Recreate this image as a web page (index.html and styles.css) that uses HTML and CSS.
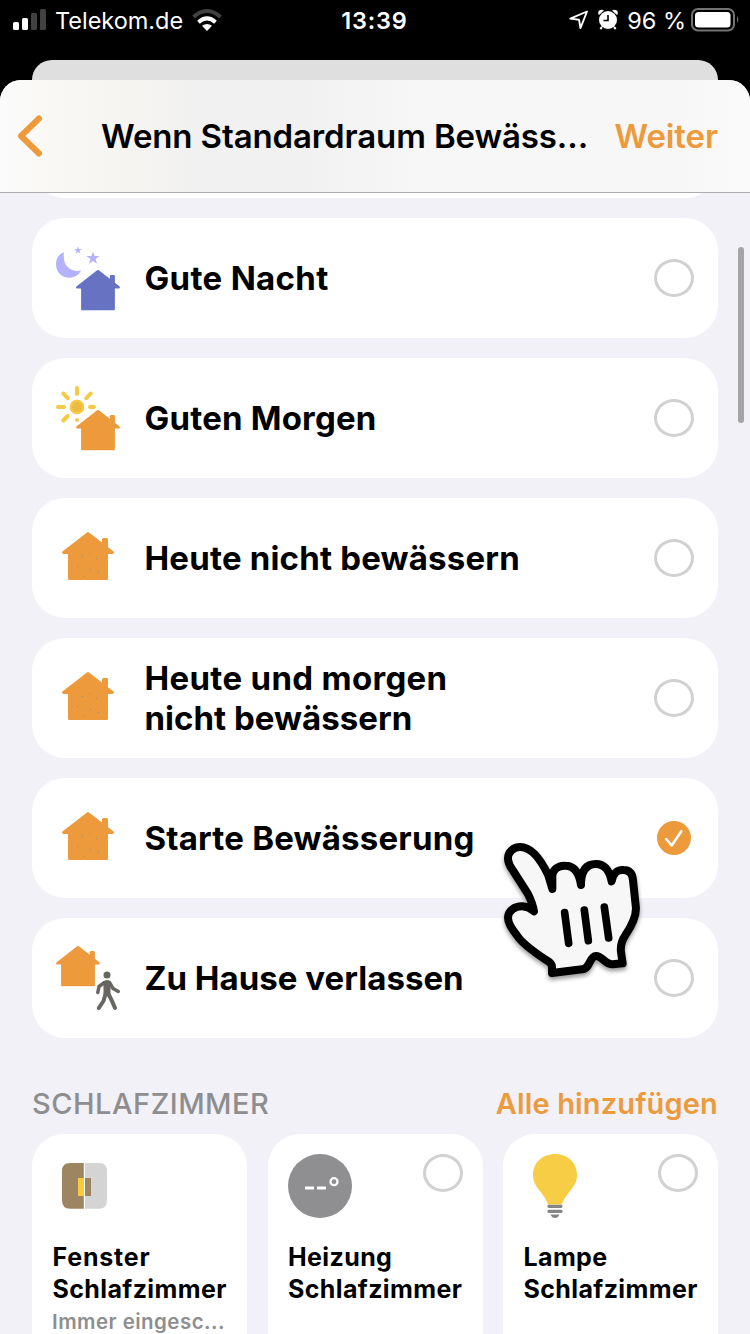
FILE: index.html
```html
<!DOCTYPE html>
<html lang="de">
<head>
<meta charset="utf-8">
<title>Automation</title>
<link rel="stylesheet" href="styles.css">
</head>
<body>
<svg class="defs" width="0" height="0">
  <defs>
    <symbol id="house" viewBox="0 0 52 48"><path d="M25 .4Q26-.3 27 .4L40 10.4V7.500Q40 6 41.500 6H44.500Q46 6 46 7.500V15.200L51.600 19.600Q52.500 21.600 50.500 22H46V46.500Q46 48 44.500 48H7.500Q6 48 6 46.500V22H1.500Q-.5 21.600.4 19.600Z"/></symbol>
  </defs>
</svg>
<div class="phone">
  <div class="status">
    <div class="status-left">
      <svg class="signal" width="34" height="22" viewBox="0 0 34 22"><g fill="#fff"><rect x="0" y="13" width="6" height="8" rx="1.500"/><rect x="9" y="9" width="6" height="12" rx="1.500"/></g><g fill="#414141"><rect x="18" y="4" width="6" height="17" rx="1.500"/><rect x="27" y="0" width="6" height="21" rx="1.500"/></g></svg>
      <span class="carrier">Telekom.de</span>
      <svg class="wifi" width="30" height="22" viewBox="0 0 30 22"><path d="M1.500 8Q15-4 28.500 8" fill="none" stroke="#414141" stroke-width="4"/><path d="M6.500 13.200Q15 5.500 23.500 13.200" fill="none" stroke="#fff" stroke-width="4"/><path d="M10 16.800Q15 13 20 16.800L15 22Z" fill="#fff"/></svg>
    </div>
    <span class="time">13:39</span>
    <div class="status-right">
      <svg class="loc" width="20" height="20" viewBox="0 0 20 20"><path d="M1.300 8.600L18 1.500L11.500 18L10 9.700Z" fill="none" stroke="#fff" stroke-width="1.900" stroke-linejoin="round"/></svg>
      <svg class="alarm" width="20" height="22" viewBox="0 0 20 22"><g fill="#fff"><circle cx="10" cy="11" r="9"/><path d="M.3 5Q-.5 1 4 .8L6 1.400L1 6ZM19.700 5Q20.500 1 16 .8L14 1.400L19 6Z"/></g><path d="M4 18L2.300 20M16 18L17.700 20" stroke="#fff" stroke-width="2"/><path d="M10 6V11.500H5.500" fill="none" stroke="#000" stroke-width="1.600"/></svg>
      <span class="percent">96 %</span>
      <svg class="battery" width="48" height="24" viewBox="0 0 48 24"><rect x="1" y="1" width="42" height="21.500" rx="6" fill="none" stroke="#737373" stroke-width="2"/><rect x="4" y="4" width="35.500" height="15.500" rx="3.500" fill="#fff"/><path d="M46 8Q48.500 11.500 46 15Z" fill="#737373"/></svg>
    </div>
  </div>
  <div class="back-sheet"></div>
  <main class="sheet">
    <header class="nav">
      <svg class="chevron" width="26" height="42" viewBox="0 0 26 42"><path d="M22 3.500L4 21L22 38.500" fill="none" stroke="#ec9a3c" stroke-width="6" stroke-linecap="round" stroke-linejoin="round"/></svg>
      <h1 class="title">Wenn Standardraum Bewäss...</h1>
      <a class="next">Weiter</a>
    </header>
    <div class="content">
      <div class="scenes">
        <div class="scene"></div>
        <div class="scene">
          <svg class="scene-icon" viewBox="0 0 64 64"><path d="M8 6.300C1 9 .1 14 .1 19C.1 26 6 31.800 13 31.800C18 31.800 22.500 29.500 25 24.500C14 27 6 19 8 6.300Z" fill="#b4b2fa"/><path fill="#b4b2fa" d="M22 .3l.9 2.800h2.900l-2.300 1.700.9 2.800-2.400-1.700-2.400 1.700.9-2.800-2.300-1.700h2.900zM37 5.500l1.600 4.600h4.900l-3.900 3 1.400 4.700-4-2.900-4 2.900 1.400-4.700-3.900-3h4.900z"/><use href="#house" x="20" y="24" width="44" height="40.600" fill="#6872c3"/></svg>
          <span class="scene-name wide">Gute Nacht</span><i class="radio"></i>
        </div>
        <div class="scene">
          <svg class="scene-icon" viewBox="0 0 64 64"><circle cx="21" cy="21" r="7.200" fill="#eebb42"/><circle cx="21" cy="21" r="6.200" fill="none" stroke="#f6c944" stroke-width="2"/><path d="M21 2V8M2 21H8M34 21H38M7.300 7.500L11.700 12.200M34.700 7.500L30.300 12.200M7.300 34.500L11.700 30M21 34V34.100" stroke="#f6ca45" stroke-width="4" stroke-linecap="round"/><use href="#house" x="20" y="24" width="44" height="40.600" fill="#ec9a3c"/></svg>
          <span class="scene-name">Guten Morgen</span><i class="radio"></i>
        </div>
        <div class="scene">
          <svg class="scene-icon" viewBox="0 0 64 64"><use href="#house" x="6" y="6" width="52" height="48" fill="#ec9a3c"/><path d="M26 30.500h1M33 27.500h1M40 32.500h1M21 40.500h1M34 43.500h1M42 46.500h1M27 50.500h1" stroke="#a58b69"/></svg>
          <span class="scene-name">Heute nicht bewässern</span><i class="radio"></i>
        </div>
        <div class="scene">
          <svg class="scene-icon" viewBox="0 0 64 64"><use href="#house" x="6" y="6" width="52" height="48" fill="#ec9a3c"/><path d="M26 30.500h1M33 27.500h1M40 32.500h1M21 40.500h1M34 43.500h1M42 46.500h1M27 50.500h1" stroke="#a58b69"/></svg>
          <span class="scene-name"><span class="wide">Heute und morgen</span><br><span class="tight">nicht bewässern</span></span><i class="radio"></i>
        </div>
        <div class="scene">
          <svg class="scene-icon" viewBox="0 0 64 64"><use href="#house" x="6" y="6" width="52" height="48" fill="#ec9a3c"/><path d="M26 30.500h1M33 27.500h1M40 32.500h1M21 40.500h1M34 43.500h1M42 46.500h1M27 50.500h1" stroke="#a58b69"/></svg>
          <span class="scene-name">Starte Bewässerung</span>
          <svg class="check" viewBox="0 0 34 34"><circle cx="17" cy="17" r="17" fill="#ec9a3c"/><path d="M9.200 18L14.700 24.500L24.300 10.200" fill="none" stroke="#fff" stroke-width="2.500" stroke-linecap="round" stroke-linejoin="round"/></svg>
        </div>
        <div class="scene">
          <svg class="scene-icon" viewBox="0 0 64 64"><use href="#house" x="0" y="0" width="44" height="40.600" fill="#ec9a3c"/><g fill="none" stroke="#686662" stroke-linecap="round" stroke-linejoin="round"><circle cx="51" cy="29" r="3.500" fill="#686662" stroke="none"/><path d="M51 37.500V47" stroke-width="7"/><path d="M48.500 36.500L43 40.500L41.800 46.500M53.500 36.500L57 42.500L62.300 45.500" stroke-width="3.500"/><path d="M49.500 48L47.500 55L42.800 62M52.500 48L56 55L59 62" stroke-width="4"/></g></svg>
          <span class="scene-name tight">Zu Hause verlassen</span><i class="radio"></i>
        </div>
      </div>
      <div class="section">
        <h2 class="room">SCHLAFZIMMER</h2>
        <a class="add-all">Alle hinzufügen</a>
      </div>
      <div class="tiles">
        <div class="tile">
          <div class="tile-top"><svg width="64" height="64" viewBox="0 0 64 64"><path d="M31.800 9H18Q10 9 10 17V46Q10 54.700 18 54.700H31.800Z" fill="#9e8562"/><path d="M33 9H47Q55 9 55 17V46Q55 54.700 47 54.700H33Z" fill="#d4d4d4"/><rect x="26" y="24" width="6" height="18" fill="#fac93d"/><rect x="33" y="24" width="6" height="18" fill="#9e8562"/></svg></div>
          <span class="tile-name"><span class="wide">Fenster</span><br>Schlafzimmer</span>
          <span class="tile-note">Immer eingesc...</span>
        </div>
        <div class="tile">
          <div class="tile-top"><svg width="64" height="64" viewBox="0 0 64 64"><circle cx="32" cy="32" r="32" fill="#8f8f91"/><path d="M17 34H26M29 34H38" stroke="#fff" stroke-width="3"/><circle cx="46" cy="27.700" r="3.500" fill="none" stroke="#fff" stroke-width="2.300"/></svg><i class="radio"></i></div>
          <span class="tile-name">Heizung<br>Schlafzimmer</span>
        </div>
        <div class="tile">
          <div class="tile-top"><svg width="64" height="64" viewBox="0 0 64 64"><path d="M32 0C19 0 10 9 10 21C10 34 21 38 25 50.500H39C43 38 54 34 54 21C54 9 45 0 32 0Z" fill="#f7cd46"/><path d="M26 52.300H38M26 57.300H38" stroke="#858585" stroke-width="3.300" stroke-linecap="round"/><path d="M27.500 60.500H36.500Q35 64 32 64Q29 64 27.500 60.500Z" fill="#858585"/></svg><i class="radio"></i></div>
          <span class="tile-name">Lampe<br>Schlafzimmer</span>
        </div>
      </div>
    </div>
    <div class="scrollbar"></div>
  </main>
  <svg class="hand" viewBox="60 120 440 430"><path d="M216 519V500Q216 490 200 481C165 458 125 430 110 405C94 385 84 370 84 353C84 332 105 318 128 319Q148 321 162 334Q158 310 144 282L98 210Q84 191 84 175C84 155 101 141 121 141C155 141 182 178 205 226L217 267V230C217 210 233 196 256 197C282 197 297 215 303 255C303 215 316 192 348 192C374 192 388 210 395 244C400 219 411 209 431 210C448 210 457 220 459 240L468 325C468 355 453 381 436 406C423 425 420 443 424 463L428 490L398 493C374 494 367 467 348 468C327 469 332 506 306 508Z" fill="#f7f7f7" stroke="#000" stroke-width="24" stroke-linejoin="round"/><path d="M254 338L266 430M313 330L325 422M373 321L386 414" stroke="#000" stroke-width="23" stroke-linecap="round"/></svg>
</div>
</body>
</html>
```
FILE: styles.css
```css
* { box-sizing: border-box; }
body {
  margin: 0;
  background: #000;
  font-family: Inter, "Noto Sans", sans-serif;
  color: #000;
}
h1, h2 { margin: 0; }
svg { display: block; flex: none; }
.defs { position: absolute; }
.phone {
  position: relative;
  width: 750px;
  height: 1334px;
  overflow: hidden;
  display: flex;
  flex-direction: column;
  background: #000;
}

/* Status bar */
.status {
  height: 60px;
  padding: 0 11px 20px 13px;
  display: grid;
  grid-template-columns: 1fr auto 1fr;
  align-items: center;
  color: #fff;
  font-size: 23.5px;
  white-space: nowrap;
}
.status-left, .status-right { display: flex; align-items: center; }
.status-right { justify-content: flex-end; }
.carrier { margin: 1px 0 0 8px; letter-spacing: -0.02px; }
.wifi { margin-left: 9px; }
.time { font-weight: 600; letter-spacing: 0.8px; margin: 1px 3px 0 0; }
.alarm { margin-left: 9px; }
.percent { margin: 1px 5px 0 9px; letter-spacing: 0; }

/* Sheets */
.back-sheet {
  height: 40px;
  margin: 0 32px -20px;
  border-radius: 20px 20px 0 0;
  background: #dfdfdf;
  flex: none;
}
.sheet {
  position: relative;
  flex: 1;
  min-height: 0;
  display: flex;
  flex-direction: column;
  overflow: hidden;
  border-radius: 21px 21px 0 0;
  background: #f2f1f7;
}
.nav {
  height: 113px;
  flex: none;
  display: flex;
  align-items: center;
  padding: 0 32px 0 17px;
  border-bottom: 1px solid #adadad;
  background: linear-gradient(90deg, #fbfbfb 0, #f8f7f3 70px, #f5f4f1 130px, #f1f1f1 200px, #f1f1f1 300px, #f7f7f7 430px, #f7f7f7 670px, #fafafa 750px);
  white-space: nowrap;
}
.title { margin-left: 58px; font-size: 33px; font-weight: 600; letter-spacing: -0.12px; }
.next { margin-left: auto; font-size: 33px; font-weight: 600; letter-spacing: -0.1px; color: #ec9a3c; }
.content { flex: 1; min-height: 0; overflow: hidden; padding: 0 32px; }

/* Scene list */
.scenes { display: flex; flex-direction: column; gap: 20px; margin-top: -115px; }
.scene {
  height: 120px;
  flex: none;
  display: flex;
  align-items: center;
  padding: 0 24px;
  border-radius: 33px;
  background: #fff;
}
.scene-icon { width: 64px; height: 64px; margin-right: 24.500px; overflow: visible; }
.scene-name { flex: 1; font-size: 33px; font-weight: 700; line-height: 40px; letter-spacing: 0.19px; white-space: nowrap; }
.wide { letter-spacing: 0.32px; }
.tight { letter-spacing: 0.03px; }
.radio { width: 40px; height: 38px; flex: none; border: 3px solid #d1d1d1; border-radius: 50%; }
.check { width: 34px; height: 34px; margin-right: 3px; }

/* Room section */
.section {
  height: 96px;
  display: flex;
  justify-content: space-between;
  align-items: flex-end;
  padding-bottom: 10px;
  line-height: 40px;
  white-space: nowrap;
}
.room { font-size: 29px; font-weight: 500; letter-spacing: 0.5px; color: #8e8e90; }
.add-all { font-size: 29px; font-weight: 600; letter-spacing: 0.15px; color: #ec9a3c; }
.tiles { display: grid; grid-template-columns: repeat(3, 215px); justify-content: space-between; }
.tile {
  height: 240px;
  padding: 20px;
  display: flex;
  flex-direction: column;
  border-radius: 32px;
  background: #fff;
  white-space: nowrap;
}
.tile-top { display: flex; justify-content: space-between; margin-bottom: 23px; }
.tile-name { padding-left: 0.500px; font-size: 25px; font-weight: 700; line-height: 32px; letter-spacing: 0.38px; }
.tile-name .wide { letter-spacing: 0.8px; }
.tile-note { margin-top: 3px; font-size: 20.500px; font-weight: 600; line-height: 28px; letter-spacing: 0.45px; color: #8e8e90; }

/* Overlays */
.scrollbar { position: absolute; left: 738px; top: 167px; width: 6px; height: 176px; border-radius: 3px; background: #a5a5a5; }
.hand {
  position: absolute;
  left: 500px;
  top: 840px;
  width: 146.67px;
  height: 143.33px;
  overflow: visible;
  filter: drop-shadow(0 3px 2px rgba(0, 0, 0, 0.4));
}
```
